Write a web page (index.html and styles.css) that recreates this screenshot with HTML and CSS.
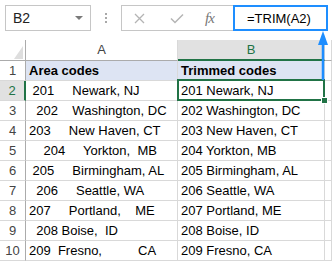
FILE: index.html
```html
<!DOCTYPE html>
<html>
<head>
    <title>TRIM formula</title>
    <link rel="stylesheet" href="styles.css">
</head>
<body>

<!-- Name box + formula bar -->
<div class="toolbar">
    <div class="namebox"><span>B2</span><span class="caret"></span></div>
    <div class="dots"><i></i><i></i><i></i></div>
    <div class="fbar">
        <div class="btns">
            <svg class="ico-x" width="11" height="11" viewBox="0 0 11 11"><path d="M1 1 L10 10 M10 1 L1 10" stroke="#b4b4b4" stroke-width="1.3" fill="none"/></svg>
            <svg class="ico-ok" width="14" height="11" viewBox="0 0 14 11"><path d="M1 5.5 L5 9.5 L13 1.5" stroke="#b4b4b4" stroke-width="1.5" fill="none"/></svg>
            <span class="fx">fx</span>
        </div>
        <div class="formula">=TRIM(A2)</div>
    </div>
</div>

<!-- Sheet -->
<div class="sheet">
    <div class="c corner"><span class="tri"></span></div>
    <div class="c ch">A</div>
    <div class="c ch sel-col">B</div>
    <div class="c ch"></div>

    <div class="c rh">1</div>
    <div class="c hd">Area codes</div>
    <div class="c hd">Trimmed codes</div>
    <div class="c"></div>

    <div class="c rh sel-row">2</div>
    <div class="c"> 201     Newark, NJ</div>
    <div class="c active">201 Newark, NJ</div>
    <div class="c"></div>

    <div class="c rh">3</div>
    <div class="c">  202    Washington, DC</div>
    <div class="c">202 Washington, DC</div>
    <div class="c"></div>

    <div class="c rh">4</div>
    <div class="c">203     New Haven, CT</div>
    <div class="c">203 New Haven, CT</div>
    <div class="c"></div>

    <div class="c rh">5</div>
    <div class="c">    204     Yorkton,  MB</div>
    <div class="c">204 Yorkton, MB</div>
    <div class="c"></div>

    <div class="c rh">6</div>
    <div class="c"> 205     Birmingham, AL</div>
    <div class="c">205 Birmingham, AL</div>
    <div class="c"></div>

    <div class="c rh">7</div>
    <div class="c">  206     Seattle, WA</div>
    <div class="c">206 Seattle, WA</div>
    <div class="c"></div>

    <div class="c rh">8</div>
    <div class="c">207     Portland,    ME</div>
    <div class="c">207 Portland, ME</div>
    <div class="c"></div>

    <div class="c rh">9</div>
    <div class="c">  208 Boise,  ID</div>
    <div class="c">208 Boise, ID</div>
    <div class="c"></div>

    <div class="c rh">10</div>
    <div class="c">209  Fresno,          CA</div>
    <div class="c">209 Fresno, CA</div>
    <div class="c"></div>
</div>

<!-- callout arrow pointing at the formula -->
<svg class="arrow" width="14" height="52" viewBox="0 0 14 52">
    <line x1="7" y1="12" x2="7" y2="50" stroke="#1e8eff" stroke-width="2.5"/>
    <polygon points="7,1 12,15 2,15" fill="#1e8eff"/>
</svg>

</body>
</html>
```

FILE: styles.css
```css
body {
    margin: 0;
    width: 332px;
    height: 261px;
    overflow: hidden;
    position: relative;
    background: #fff;
    font-family: "Liberation Sans", Arial, sans-serif;
    color: #000;
}

/* ---- toolbar ---- */
.toolbar {
    display: flex;
    align-items: flex-start;
    height: 40px;
    padding: 5px 0 0 5px;
    box-sizing: border-box;
}
.namebox {
    width: 86px;
    height: 26px;
    box-sizing: border-box;
    border: 1px solid #c6c6c6;
    display: flex;
    align-items: center;
    justify-content: space-between;
    padding: 0 7px;
    font-size: 14px;
    color: #222;
}
.caret {
    width: 0;
    height: 0;
    border-left: 4px solid transparent;
    border-right: 4px solid transparent;
    border-top: 4px solid #7a7a7a;
}
.dots {
    width: 30px;
    display: flex;
    flex-direction: column;
    align-items: center;
    gap: 2px;
    padding-top: 8px;
}
.dots i {
    width: 2px;
    height: 2px;
    background: #a8a8a8;
}
.fbar {
    display: flex;
    height: 26px;
}
.btns {
    width: 112px;
    box-sizing: border-box;
    border: 1px solid #c6c6c6;
    border-right: none;
    display: flex;
    align-items: center;
}
.ico-x {
    margin-left: 12px;
}
.ico-ok {
    margin-left: 25px;
}
.fx {
    margin-left: 21px;
    font-family: "Liberation Serif", serif;
    font-style: italic;
    font-size: 15px;
    color: #777;
    letter-spacing: -1px;
}
.formula {
    width: 95px;
    box-sizing: border-box;
    border: 2px solid #1e8eff;
    display: flex;
    align-items: center;
    padding-left: 12px;
    font-size: 13px;
}

/* ---- sheet grid ---- */
.sheet {
    display: grid;
    grid-template-columns: 26px 152px 147px 1fr;
    grid-template-rows: 21px repeat(10, 20px);
}
.c {
    box-sizing: border-box;
    border-right: 1px solid #d9d9d9;
    border-bottom: 1px solid #d9d9d9;
    font-size: 13px;
    line-height: 19px;
    padding-left: 3px;
    white-space: pre;
    overflow: hidden;
}
.ch {
    text-align: center;
    padding: 0;
    color: #444;
    line-height: 20px;
    border-bottom-color: #ababab;
}
.corner {
    padding: 0 2px 1px 0;
    display: flex;
    align-items: flex-end;
    justify-content: flex-end;
    border-right-color: #ababab;
    border-bottom-color: #ababab;
}
.tri {
    width: 0;
    height: 0;
    border-left: 9px solid transparent;
    border-bottom: 13px solid #dedede;
}
.rh {
    text-align: center;
    padding: 0;
    color: #444;
    border-right-color: #ababab;
}
.sel-col {
    background: #e1e1e1;
    color: #217346;
    border-bottom: 2px solid #217346;
    line-height: 19px;
}
.sel-row {
    background: #e1e1e1;
    color: #217346;
    border-right: 2px solid #217346;
}
.hd {
    background: #dde4f3;
    font-weight: bold;
}
.active {
    position: relative;
    overflow: visible;
}
.active::after {
    content: '';
    position: absolute;
    left: -1px;
    top: -2px;
    right: -1px;
    bottom: -1px;
    border: 2px solid #217346;
}
.active::before {
    content: '';
    position: absolute;
    right: -4px;
    bottom: -4px;
    width: 5px;
    height: 5px;
    background: #217346;
    border: 1px solid #fff;
    z-index: 1;
}

.arrow {
    position: absolute;
    left: 316px;
    top: 30px;
}
```
